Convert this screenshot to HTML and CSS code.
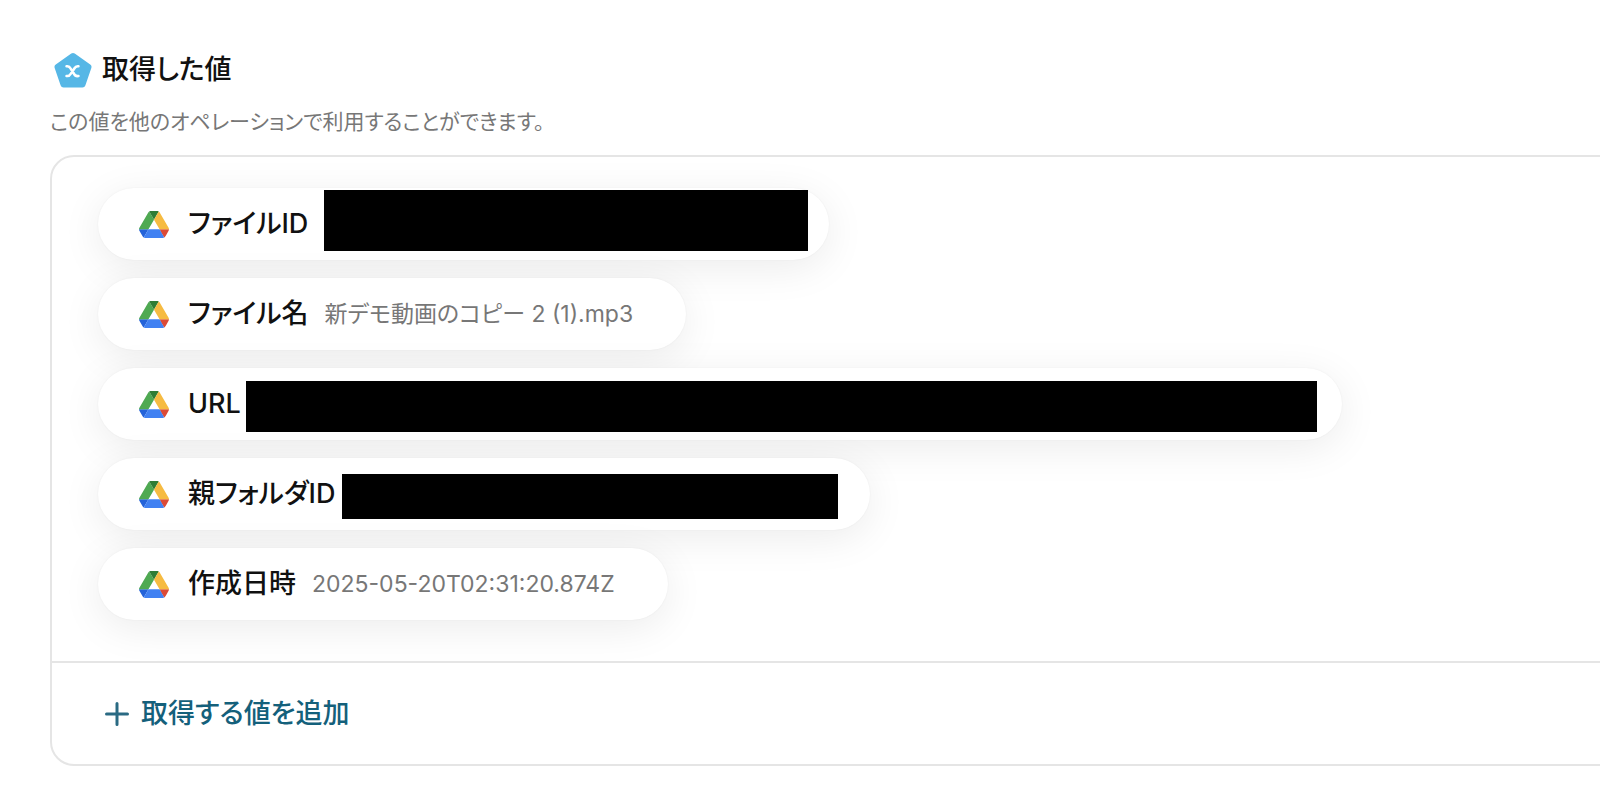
FILE: index.html
```html
<!DOCTYPE html>
<html lang="ja">
<head>
    <meta charset="UTF-8">
    <meta name="viewport" content="width=device-width, initial-scale=1.0">
    <title>取得した値</title>
    <link rel="stylesheet" href="styles.css">
</head>
<body>
    <svg class="sprite" aria-hidden="true">
        <symbol id="drive" viewBox="0 0 87.3 78">
            <path fill="#2563d9" d="M6.6 66.85l3.85 6.65c.8 1.4 1.95 2.5 3.3 3.3L27.5 53H0c0 1.55.4 3.1 1.2 4.5z"/>
            <path fill="#4fa952" d="M43.65 25L29.9 1.2c-1.35.8-2.5 1.9-3.3 3.3L1.2 48.5A9 9 0 0 0 0 53h27.5z"/>
            <path fill="#db4a37" d="M73.55 76.8c1.35-.8 2.5-1.9 3.3-3.3l1.6-2.75L86.1 57.5c.8-1.4 1.2-2.95 1.2-4.5H59.8l5.85 11.5z"/>
            <path fill="#2f7d35" d="M43.65 25L57.4 1.2C56.05.4 54.5 0 52.9 0H34.4c-1.6 0-3.15.45-4.5 1.2z"/>
            <path fill="#4181f2" d="M59.8 53H27.5L13.75 76.8c1.35.8 2.9 1.2 4.5 1.2h50.8c1.6 0 3.15-.45 4.5-1.2z"/>
            <path fill="#f6bb42" d="M73.4 26.5L60.7 4.5c-.8-1.4-1.95-2.5-3.3-3.3L43.65 25 59.8 53h27.45c0-1.55-.4-3.1-1.2-4.5z"/>
        </symbol>
    </svg>

    <main class="section">
        <div class="section-header">
            <svg class="section-icon" viewBox="0 0 38 36" aria-hidden="true">
                <path fill="#56b7e6" stroke="#56b7e6" stroke-width="6" stroke-linejoin="round" d="M19 4L34.500 15 28.500 32.500H9.500L3.500 15z"/>
                <path fill="none" stroke="#fff" stroke-width="2.500" stroke-linecap="round" stroke-linejoin="round" d="M12.500 14.300C14.800 13.900 15.700 14.600 16.600 16.500C17.400 18.300 19.200 20.200 20 21.900C20.900 23.800 22 24.500 24.500 24M24.500 14.300C22.300 13.900 21.400 14.600 20.300 16.500C19.300 18.300 17.700 20.200 16.700 21.900C15.600 23.800 14.700 24.500 12.500 24"/>
            </svg>
            <h1>取得した値</h1>
        </div>
        <p class="description">この値を他のオペレーションで利用することができます。</p>

        <div class="panel">
            <ul class="value-list">
                <li class="value-item">
                    <svg class="drive-icon" aria-hidden="true"><use href="#drive"/></svg>
                    <span class="value-name">ファイルID</span>
                    <span class="mask mask-file"></span>
                </li>
                <li class="value-item">
                    <svg class="drive-icon" aria-hidden="true"><use href="#drive"/></svg>
                    <span class="value-name">ファイル名</span>
                    <span class="value-text">新デモ動画のコピー 2 (1).mp3</span>
                </li>
                <li class="value-item">
                    <svg class="drive-icon" aria-hidden="true"><use href="#drive"/></svg>
                    <span class="value-name">URL</span>
                    <span class="mask mask-url"></span>
                </li>
                <li class="value-item">
                    <svg class="drive-icon" aria-hidden="true"><use href="#drive"/></svg>
                    <span class="value-name">親フォルダID</span>
                    <span class="mask mask-folder"></span>
                </li>
                <li class="value-item">
                    <svg class="drive-icon" aria-hidden="true"><use href="#drive"/></svg>
                    <span class="value-name">作成日時</span>
                    <span class="value-text">2025-05-20T02:31:20.874Z</span>
                </li>
            </ul>
            <div class="panel-footer">
                <button type="button" class="add-btn">
                    <svg class="plus-icon" viewBox="0 0 24 24" aria-hidden="true">
                        <path d="M12 1.500v21M1.500 12h21"/>
                    </svg>
                    取得する値を追加
                </button>
            </div>
        </div>
    </main>
</body>
</html>
```

FILE: styles.css
```css
* {
    box-sizing: border-box;
}
body {
    margin: 0;
    background-color: #fff;
    color: #111;
    font-family: Inter, "Noto Sans CJK JP", sans-serif;
    font-feature-settings: "palt";
    overflow-x: hidden;
}
.sprite {
    display: none;
}
.section {
    padding: 50px 0 42px 50px;
}
.section-header {
    display: flex;
    align-items: center;
    gap: 10px;
    height: 40px;
    padding-left: 4px;
}
.section-icon {
    width: 38px;
    height: 36px;
}
h1 {
    margin: 0;
    font-size: 27px;
    font-weight: 500;
    line-height: 40px;
}
.description {
    margin: 16px 0 17px;
    color: #777;
    font-size: 21px;
    line-height: 32px;
}
.panel {
    margin-right: -24px;
    border: 2px solid #e5e5e5;
    border-radius: 24px;
    overflow: hidden;
}
.value-list {
    display: flex;
    flex-direction: column;
    align-items: flex-start;
    gap: 18px;
    margin: 0;
    padding: 31px 46px 41px;
    list-style: none;
}
.value-item {
    display: flex;
    align-items: center;
    height: 72px;
    padding: 0 53px 0 41px;
    border-radius: 36px;
    background-color: #fff;
    box-shadow: 0 0 2px rgba(0, 0, 0, 0.06), 0 8px 40px rgba(0, 0, 0, 0.08);
    line-height: 40px;
    white-space: nowrap;
}
.drive-icon {
    width: 30px;
    height: 27px;
    margin-right: 19px;
}
.value-name {
    font-size: 27px;
    font-weight: 500;
}
.value-text {
    margin-left: 16px;
    color: #777;
    font-size: 23px;
}
.mask {
    background-color: #000;
}
.mask-file {
    width: 484px;
    height: 61px;
    margin: 0 -32px 8px 16px;
}
.mask-url {
    width: 1071px;
    height: 51px;
    margin: 5px -28px 0 5px;
}
.mask-folder {
    width: 496px;
    height: 45px;
    margin: 5px -21px 0 7px;
}
.panel-footer {
    padding: 31px 53px 30px;
    border-top: 2px solid #e5e5e5;
}
.add-btn {
    display: flex;
    align-items: center;
    gap: 12px;
    padding: 0;
    border: none;
    background: none;
    color: #14607b;
    font: inherit;
    font-feature-settings: "palt";
    font-size: 27px;
    font-weight: 500;
    line-height: 40px;
    cursor: pointer;
}
.plus-icon {
    width: 24px;
    height: 24px;
    fill: none;
    stroke: #2a6a83;
    stroke-width: 3;
    stroke-linecap: round;
}
```
